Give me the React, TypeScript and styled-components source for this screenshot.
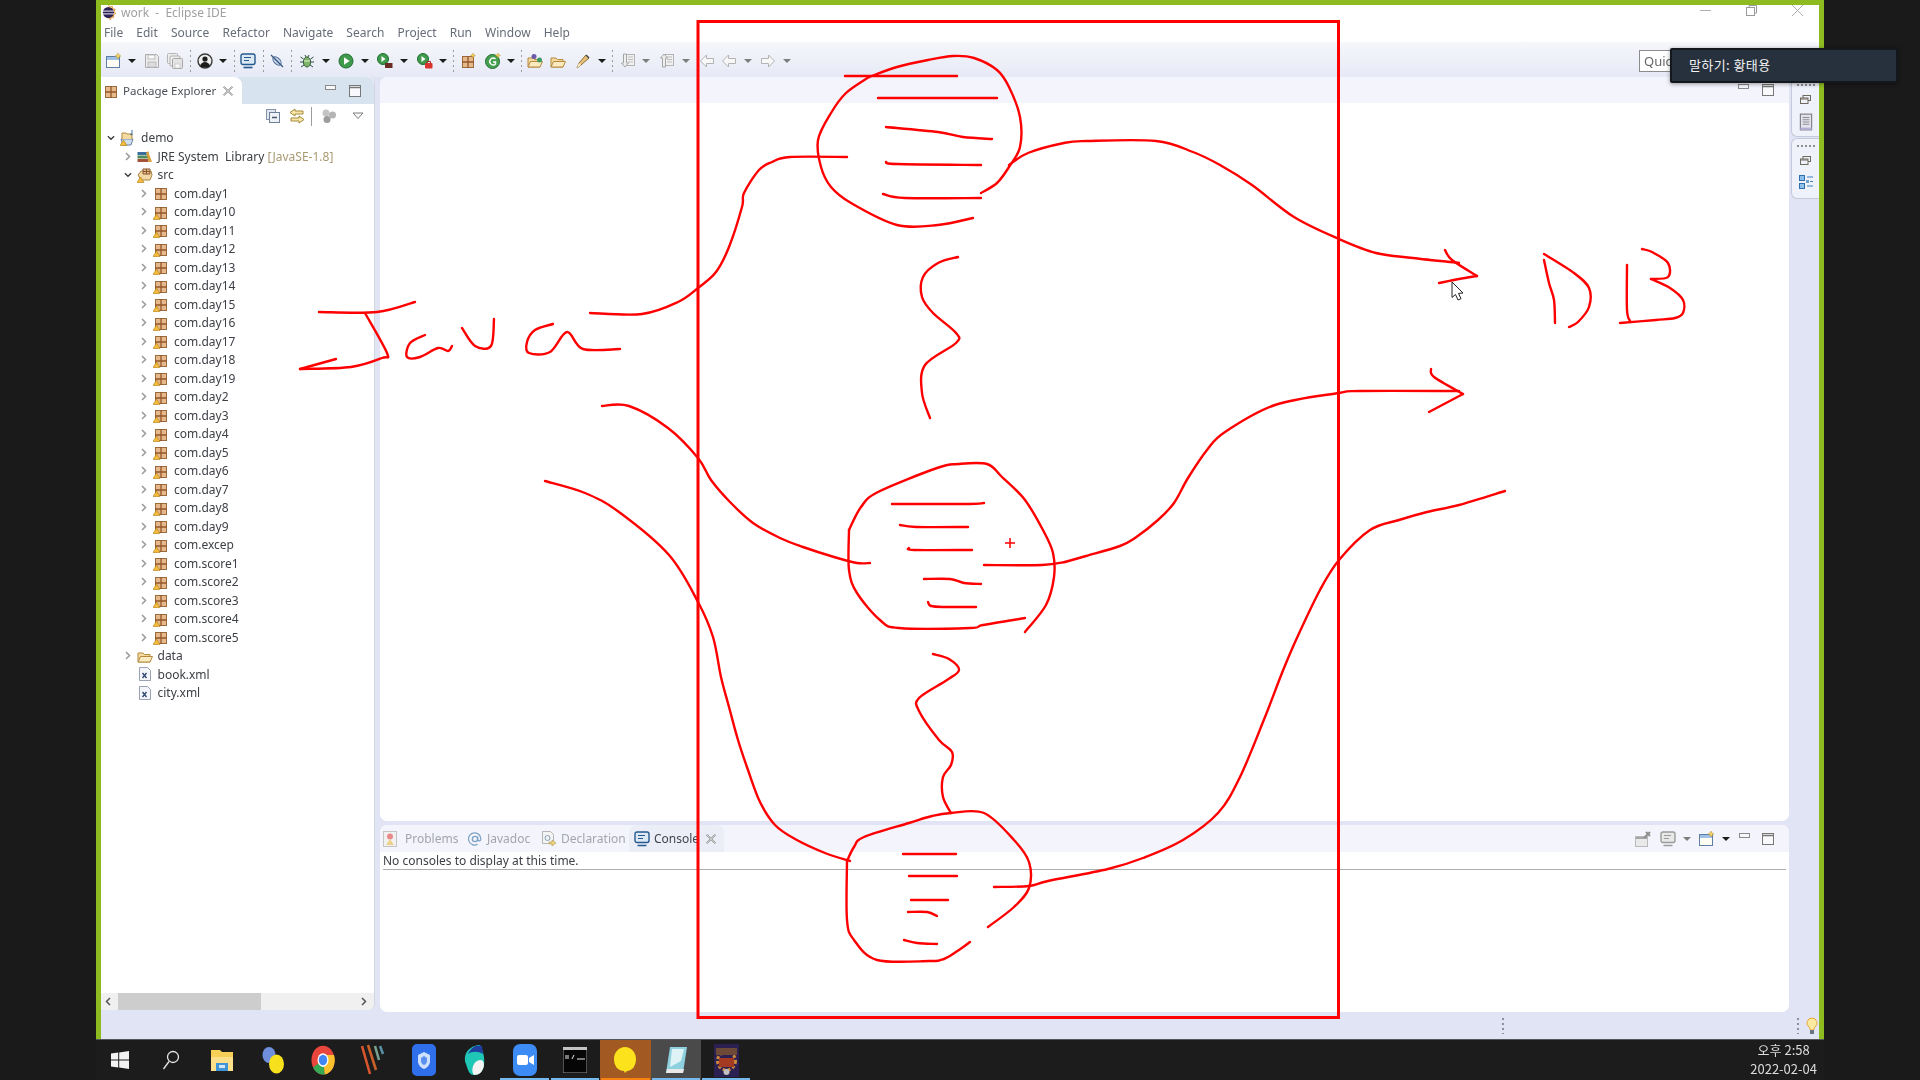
import { ReactNode } from 'react'
import styled, { createGlobalStyle } from 'styled-components'

const UI_FONT = '"Noto Sans", "Noto Sans CJK KR", sans-serif'
const GREEN = '#8dbb20'
const LILAC = '#e1e4f5'
const BAND = '#f3f4fc'
const INK = '#ff0000'

const GlobalStyle = createGlobalStyle`
  html, body {
    margin: 0;
    background: #1a1a1a;
    overflow: hidden;
  }
  * { box-sizing: border-box; }
`

const Screen = styled.div`
  position: relative;
  width: 1920px;
  height: 1080px;
  overflow: hidden;
  background: #1a1a1a;
  font-family: ${UI_FONT};
`

const Blurred = styled.div`
  filter: blur(0.35px);
`

const Window = styled.div`
  margin-left: 96px;
  width: 1728px;
  height: 1039px;
  display: flex;
  flex-direction: column;
  border: 5px solid ${GREEN};
  border-bottom: 0;
  background: #fff;
`

const TitleBar = styled.div`
  height: 18px;
  flex: none;
  display: flex;
  align-items: center;
  padding-bottom: 4px;
  color: #a0a0a0;
  font-size: 12px;
  white-space: pre;
  background: #fff;
`

const TitleText = styled.span`
  margin-left: 5px;
`

const WindowButtons = styled.div`
  margin-left: auto;
  margin-top: -4px;
  display: flex;
  gap: 35px;
  padding-right: 16px;
`

const MenuBar = styled.div`
  height: 19px;
  flex: none;
  display: flex;
  align-items: center;
  padding-left: 3px;
  gap: 13.1px;
  font-size: 12px;
  color: #666d78;
`

const Toolbar = styled.div`
  height: 35px;
  flex: none;
  display: flex;
  align-items: center;
  padding: 2px 0 0 5px;
  background: linear-gradient(#f6f7fb, #e6e9f6);
`

const Slot = styled.span<{ $gap?: number; $w?: number }>`
  flex: none;
  display: flex;
  align-items: center;
  justify-content: center;
  margin-left: ${p => p.$gap ?? 0}px;
  width: ${p => p.$w ?? 16}px;
`

const Sep = styled.span<{ $gap: number }>`
  flex: none;
  width: 1px;
  height: 22px;
  margin-left: ${p => p.$gap}px;
  background: repeating-linear-gradient(#9a9a9a 0 2px, transparent 2px 5px);
`

const Drop = styled.span<{ $gap: number; $off?: boolean }>`
  flex: none;
  width: 0;
  height: 0;
  margin-left: ${p => p.$gap}px;
  border-left: 4px solid transparent;
  border-right: 4px solid transparent;
  border-top: 4px solid ${p => (p.$off ? '#7d7d7d' : '#1c1c1c')};
`

const QuickAccess = styled.div`
  flex: none;
  margin-left: 848px;
  width: 31px;
  height: 22px;
  border: 1px solid #8c8c8c;
  border-right: 0;
  background: #fff;
  color: #666;
  font-size: 13px;
  line-height: 20px;
  padding-left: 4px;
  white-space: nowrap;
  overflow: hidden;
`

const Perspective = styled.div`
  flex: 1;
  min-height: 0;
  display: flex;
  background: ${LILAC};
`

const ExplorerPanel = styled.section`
  flex: none;
  width: 274px;
  margin-bottom: 2px;
  margin-right: 5px;
  display: flex;
  flex-direction: column;
  background: #fff;
  border-right: 1px solid #d4d6de;
  border-radius: 0 7px 7px 0;
  overflow: hidden;
`

const ExplorerBand = styled.div`
  height: 27px;
  flex: none;
  display: flex;
  align-items: center;
  background: #d8e3f0;
  border-radius: 0 8px 0 0;
  padding-right: 13px;
`

const ExplorerTab = styled.div`
  flex: none;
  width: 141px;
  height: 27px;
  display: flex;
  align-items: center;
  padding-left: 2px;
  gap: 4px;
  background: #fff;
  border-radius: 0 8px 0 0;
  font-size: 11.5px;
  white-space: nowrap;
  color: #4a4f57;
`

const BandButtons = styled.div`
  margin-left: auto;
  display: flex;
  align-items: flex-start;
  gap: 13px;
`

const ViewBar = styled.div`
  height: 24.25px;
  flex: none;
  display: flex;
  align-items: center;
  padding-left: 164px;
`

const ViewSep = styled.span`
  width: 1px;
  height: 19px;
  margin-left: 6px;
  background: #9c9c9c;
`

const Tree = styled.div`
  flex: 1;
  min-height: 0;
`

const Row = styled.div<{ $depth: number }>`
  height: 18.5px;
  display: flex;
  align-items: center;
  padding-left: ${p => 6 + p.$depth * 16.5}px;
  font-size: 12px;
  color: #3d4046;
  white-space: pre;
`

const Chevron = styled.span`
  flex: none;
  width: 8px;
  height: 12px;
  display: flex;
  align-items: center;
  justify-content: center;
`

const RowIcon = styled.span`
  flex: none;
  width: 16px;
  height: 16px;
  margin: 0 5px 0 5px;
  display: flex;
`

const Decoration = styled.span`
  color: #a89a72;
`

const ScrollBar = styled.div`
  height: 17px;
  flex: none;
  display: flex;
  align-items: center;
  background: #f0f0f0;
`

const ScrollButton = styled.span`
  flex: none;
  width: 17px;
  padding-right: 3px;
  display: flex;
  justify-content: center;
`

const ScrollThumb = styled.span`
  width: 143px;
  height: 17px;
  margin-right: auto;
  background: #cdcdcd;
`

const CenterColumn = styled.div`
  flex: none;
  width: 1409px;
  display: flex;
  flex-direction: column;
  gap: 4px;
`

const EditorPanel = styled.section`
  height: 744px;
  flex: none;
  background: #fff;
  border-radius: 7px;
  overflow: hidden;
`

const EditorBand = styled.div`
  height: 26px;
  display: flex;
  align-items: center;
  justify-content: flex-end;
  background: ${BAND};
  padding-right: 15px;
`

const ConsolePanel = styled.section`
  flex: 1;
  background: #fff;
  border-radius: 7px;
  overflow: hidden;
`

const ConsoleBand = styled.div`
  height: 27px;
  display: flex;
  align-items: stretch;
  background: ${BAND};
  padding-right: 15px;
`

const ConsoleTab = styled.div<{ $active?: boolean; $w: number; $space?: number }>`
  flex: none;
  width: ${p => p.$w}px;
  display: flex;
  align-items: center;
  gap: ${p => p.$space ?? 5}px;
  padding-left: ${p => (p.$active ? 5 : 0)}px;
  font-size: 12px;
  white-space: nowrap;
  color: ${p => (p.$active ? '#40454c' : '#a3a6ab')};
  background: ${p => (p.$active ? '#eceef7' : 'transparent')};
  border-radius: 8px 8px 0 0;
`

const ConsoleButtons = styled.div`
  margin-left: auto;
  display: flex;
  align-items: center;
`

const RaisedSlot = styled(Slot)`
  margin-top: -7px;
`

const ConsoleBody = styled.div`
  margin: 1px 3px 0;
  height: 17px;
  border-bottom: 1px solid #aeaeae;
  font-size: 12px;
  line-height: 16px;
  color: #3d4046;
`

const RightTrim = styled.aside`
  flex: 1;
  display: flex;
  flex-direction: column;
  align-items: flex-end;
`

const TrimCard = styled.div<{ $h: number }>`
  flex: none;
  width: 28px;
  height: ${p => p.$h}px;
  display: flex;
  flex-direction: column;
  align-items: center;
  gap: 9px;
  padding-top: 6px;
  border: 1px solid #c6cbdc;
  border-right: 0;
  border-radius: 6px 0 0 6px;
  background: #eff1fb;
  margin-bottom: 1px;
`

const TrimDots = styled.span`
  flex: none;
  width: 18px;
  height: 2px;
  background: repeating-linear-gradient(90deg, #8f8f8f 0 2px, transparent 2px 4px);
`

const StatusBar = styled.div`
  height: 27px;
  flex: none;
  display: flex;
  align-items: center;
  background: ${LILAC};
`

const StatusDots = styled.span<{ $gap: number }>`
  flex: none;
  width: 2px;
  height: 16px;
  margin-left: ${p => p.$gap}px;
  background: repeating-linear-gradient(#8a8f99 0 2px, transparent 2px 5px);
`

const Taskbar = styled.footer`
  margin-left: 96px;
  width: 1728px;
  height: 41px;
  display: flex;
  align-items: stretch;
  background: #1c1c1c;
  border-top: 1px solid #55565a;
`

const TaskCell = styled.div<{ $w?: number; $bg?: string; $mark?: string }>`
  position: relative;
  flex: none;
  width: ${p => p.$w ?? 50.4}px;
  display: flex;
  align-items: center;
  justify-content: center;
  background: ${p => p.$bg ?? 'transparent'};

  &::after {
    content: '';
    display: ${p => (p.$mark ? 'block' : 'none')};
    position: absolute;
    left: 1px;
    right: 1px;
    bottom: 0;
    height: 2px;
    background: ${p => p.$mark};
  }
`

const Clock = styled.div`
  margin-left: auto;
  padding-right: 7px;
  text-align: center;
  color: #dcdcdc;
  font-family: "Noto Sans CJK KR", "Noto Sans", sans-serif;
  font-size: 13px;
  line-height: 19px;
`

const SpeakerTip = styled.div`
  position: absolute;
  left: 1670px;
  top: 48px;
  width: 228px;
  height: 35px;
  padding-left: 17px;
  background: #27313d;
  border: 2px solid #14171b;
  border-radius: 2px;
  box-shadow: 0 1px 4px rgba(0, 0, 0, 0.4);
  color: #f2f2f2;
  font-family: "Noto Sans CJK KR", sans-serif;
  font-size: 13px;
  letter-spacing: 0.4px;
  line-height: 29px;
`

const InkLayer = styled.svg`
  position: absolute;
  left: 0;
  top: 0;
  pointer-events: none;
`

const Svg = ({ size = 16, children }: { size?: number; children: ReactNode }) => (
  <svg width={size} height={size} viewBox="0 0 16 16" fill="none">
    {children}
  </svg>
)

const NewWizardIcon = () => (
  <Svg>
    <rect x="0.5" y="3.5" width="13" height="11" fill="#fdfdf4" stroke="#5f7ea6" />
    <rect x="1" y="4" width="12" height="3" fill="#9fc1e6" />
    <path d="M12 0l1 2 2 1-2 1-1 2-1-2-2-1 2-1z" fill="#f4d35e" stroke="#b9953a" strokeWidth="0.5" />
  </Svg>
)

const SaveIcon = () => (
  <Svg>
    <path d="M1.5 1.5h11l2 2v11h-13z" fill="#eee" stroke="#aaa" />
    <rect x="4" y="2" width="7" height="4" fill="#fafafa" stroke="#bbb" />
    <rect x="4" y="9" width="8" height="5" fill="#ddd" stroke="#bbb" />
  </Svg>
)

const SaveAllIcon = () => (
  <Svg>
    <rect x="0.5" y="0.5" width="10" height="10" rx="1" fill="#eee" stroke="#b5b5b5" />
    <rect x="3" y="3" width="10" height="10" rx="1" fill="#eee" stroke="#b0b0b0" />
    <rect x="5.5" y="5.5" width="10" height="10" rx="1" fill="#e4e4e4" stroke="#a8a8a8" />
    <rect x="8" y="11" width="5" height="4" fill="#f8f8f8" stroke="#bbb" strokeWidth="0.6" />
  </Svg>
)

const PersonaIcon = () => (
  <Svg>
    <circle cx="8" cy="8" r="7" fill="#efefef" stroke="#3a3a3a" strokeWidth="1.4" />
    <circle cx="8" cy="6" r="2.6" fill="#1d1d1d" />
    <path d="M3 13c1-3 3-4 5-4s4 1 5 4c-2 2-8 2-10 0z" fill="#1d1d1d" />
  </Svg>
)

const MonitorIcon = ({ muted }: { muted?: boolean }) => {
  const edge = muted ? '#9b9b9b' : '#24598f'
  return (
    <Svg>
      <rect x="1" y="1" width="14" height="10.5" rx="2" fill={muted ? '#e8e8e8' : '#dce9f5'} stroke={edge} strokeWidth="1.4" />
      <path d="M4 4.5h7M4 7.5h5" stroke={edge} />
      <path d="M3.5 14.5h9" stroke={edge} strokeWidth="1.6" />
    </Svg>
  )
}

const SkipIcon = () => (
  <Svg>
    <ellipse cx="8" cy="8" rx="3" ry="5" transform="rotate(-45 8 8)" fill="#c6d5e8" stroke="#4c6d96" />
    <path d="M2 2l12 12" stroke="#33527c" strokeWidth="1.2" />
  </Svg>
)

const BugIcon = () => (
  <Svg>
    <ellipse cx="8" cy="9" rx="3.6" ry="5" fill="#7fb568" stroke="#2f5b3a" />
    <path d="M1.5 4l3 2M14.5 4l-3 2M1 9h3M15 9h-3M2 14l3-2M14 14l-3-2M6 2l1 2M10 2l-1 2" stroke="#2f4f42" />
    <path d="M5 8h6" stroke="#e8f0d0" />
  </Svg>
)

const RunIcon = () => (
  <Svg>
    <circle cx="8" cy="8" r="7" fill="#3f9a4c" stroke="#1f6e33" />
    <path d="M6 4.2v7.6l5.6-3.8z" fill="#fff" />
  </Svg>
)

const CoverageIcon = () => (
  <Svg>
    <circle cx="6" cy="6" r="5.5" fill="#3f9a4c" stroke="#1f6e33" />
    <path d="M4.5 3v6l4-3z" fill="#fff" />
    <rect x="8" y="10" width="7.5" height="5" fill="#6a2c22" />
  </Svg>
)

const ExternalIcon = () => (
  <Svg>
    <circle cx="6" cy="6" r="5.5" fill="#3f9a4c" stroke="#1f6e33" />
    <path d="M4.5 3v6l4-3z" fill="#fff" />
    <rect x="8" y="10" width="7.5" height="5.5" rx="1" fill="#d8342e" />
    <path d="M10 10V8.5h3.5V10" stroke="#a52a22" />
  </Svg>
)

const PackageIcon = ({ warn, star }: { warn?: boolean; star?: boolean }) => (
  <Svg>
    <rect x="2.5" y="3.5" width="11" height="11" fill="#e5b98c" stroke="#9a6a3c" />
    <path d="M8 3v12M2 9h12" stroke="#93562a" strokeWidth="1.3" />
    {star && <path d="M13 0l.8 1.7 1.7.8-1.7.8-.8 1.7-.8-1.7-1.7-.8 1.7-.8z" fill="#f3cf52" stroke="#ad8b2d" strokeWidth="0.4" />}
    {warn && <path d="M3.5 10L7 15.5H0z" fill="#f2bb3b" stroke="#b07d16" strokeWidth="0.6" />}
  </Svg>
)

const NewClassIcon = () => (
  <Svg>
    <circle cx="7.5" cy="8.5" r="7" fill="#46a050" stroke="#1f6e33" />
    <path d="M10.5 6a3.4 3.4 0 1 0 0 5V9H8" stroke="#fff" strokeWidth="1.4" />
    <path d="M13 0l.8 1.7 1.7.8-1.7.8-.8 1.7-.8-1.7-1.7-.8 1.7-.8z" fill="#f3cf52" stroke="#ad8b2d" strokeWidth="0.4" />
  </Svg>
)

const FolderIcon = ({ dots }: { dots?: boolean }) => (
  <Svg>
    <path d="M1 14V5h5l1.5 1.5H13V14z" fill="#f4d9a0" stroke="#b48a3c" />
    <path d="M1 14l2.5-5.5H15.5L13 14z" fill="#fbe9c0" stroke="#b48a3c" />
    {dots && <circle cx="7" cy="3.5" r="2.5" fill="#6c5aa8" />}
    {dots && <circle cx="12.5" cy="7" r="2.5" fill="#3c9a64" />}
  </Svg>
)

const PenIcon = () => (
  <Svg>
    <path d="M2 15l2-5 7-8 3 3-8 7z" fill="#e8c178" stroke="#8d6c35" />
    <path d="M2 15l2-5 2 2z" fill="#fff3cf" />
    <path d="M11 2l3 3" stroke="#444" strokeWidth="1.4" />
  </Svg>
)

const AnnotationIcon = ({ up }: { up?: boolean }) => (
  <Svg>
    <rect x="6.5" y="1.5" width="8" height="11" fill="#f1f1f1" stroke="#b4b4b4" />
    <path d="M8 4h5M8 6.5h5M8 9h5" stroke="#bcbcbc" />
    <path d={up ? 'M5 1L1.5 5H3.5V14H6.5V5H8.5z' : 'M5 14L1.5 10H3.5V1H6.5V10H8.5z'} fill="#efefef" stroke="#a5a5a5" />
  </Svg>
)

const NavArrowIcon = ({ right }: { right?: boolean }) => (
  <Svg>
    <path
      d={right ? 'M1.5 5.5h7V2l6 6-6 6v-3.5h-7z' : 'M14.5 5.5h-7V2l-6 6 6 6v-3.5h7z'}
      fill="#f8f8f8"
      stroke="#b3b3b3"
    />
  </Svg>
)

const CloseMark = () => (
  <Svg size={12}>
    <path d="M3 2l5 5 5-5 1 1-5 5 5 5-1 1-5-5-5 5-1-1 5-5-5-5z" fill="#fafafa" stroke="#6e6e6e" />
  </Svg>
)

const MinButton = () => (
  <svg width="11" height="5" viewBox="0 0 11 5">
    <rect x="0.5" y="0.5" width="10" height="4" fill="#f7f7fb" stroke="#8a8a8a" />
  </svg>
)

const MaxButton = () => (
  <svg width="12" height="12" viewBox="0 0 12 12">
    <rect x="0.5" y="0.5" width="11" height="11" fill="#f9f9fd" stroke="#777" />
    <path d="M0 2.500h12" stroke="#777" strokeWidth="1.4" />
  </svg>
)

const CollapseIcon = () => (
  <Svg>
    <rect x="1.5" y="1.5" width="9" height="10" fill="#dfe6ef" stroke="#8795a8" />
    <rect x="4.5" y="4.5" width="10" height="10" fill="#eef2f7" stroke="#6e7f96" />
    <path d="M7 9.5h5" stroke="#47586e" strokeWidth="1.4" />
  </Svg>
)

const LinkIcon = () => (
  <Svg>
    <path d="M6 1L1 4.5 6 8V6h8V3H6z" fill="#f8e7a8" stroke="#a48a38" />
    <path d="M10 8l5 3.5-5 3.5v-2H2v-3h8z" fill="#f8e7a8" stroke="#a48a38" />
  </Svg>
)

const FilterIcon = () => (
  <Svg>
    <circle cx="5" cy="5" r="3.5" fill="#c4c4c4" />
    <circle cx="11.5" cy="7" r="3.5" fill="#b4b4b4" />
    <circle cx="6" cy="11.5" r="3.5" fill="#9c9c9c" />
  </Svg>
)

const ViewMenuIcon = () => (
  <svg width="12" height="8" viewBox="0 0 12 8">
    <path d="M1 1h10L6 6.5z" fill="#f6f6f6" stroke="#7e7e7e" />
  </svg>
)

const LibraryIcon = () => (
  <Svg>
    <rect x="0.5" y="11" width="11" height="3" fill="#a2533a" />
    <rect x="0.5" y="7.5" width="11" height="3" fill="#4f8a5a" />
    <rect x="0.5" y="4" width="11" height="3" fill="#3a6e9c" />
    <path d="M11 3l4 11h-3L9 5z" fill="#d9a13c" />
  </Svg>
)

const ProjectIcon = () => (
  <Svg>
    <path d="M1 9h12l-2 6H3z" fill="#cfdff0" stroke="#6b83a5" />
    <path d="M2 9V3h4l1 1h5v5" fill="#f4d9a0" stroke="#b48a3c" />
    <path d="M12 0v5l-2-1" stroke="#3a6e9c" />
    <path d="M3.5 10L7 15.5H0z" fill="#f2bb3b" stroke="#b07d16" strokeWidth="0.6" />
  </Svg>
)

const SourceIcon = () => (
  <Svg>
    <path d="M1 8l3-4h10l1 4-2 5H4z" fill="#f2d8a6" stroke="#a98440" />
    <path d="M6 2h7v5H6zM9.5 2v5M6 4.5h7" stroke="#85572a" fill="#e5b98c" />
    <path d="M3.5 10L7 15.5H0z" fill="#f2bb3b" stroke="#b07d16" strokeWidth="0.6" />
  </Svg>
)

const XmlIcon = () => (
  <Svg>
    <path d="M2.5 1.5h8l3 3v10h-11z" fill="#f3f5fa" stroke="#9aa3b3" />
    <path d="M5.5 7l4 5M9.5 7l-4 5" stroke="#344a74" strokeWidth="1.4" />
  </Svg>
)

const TreeChevron = ({ open }: { open?: boolean }) => (
  <Chevron>
    {open ? (
      <svg width="9" height="6" viewBox="0 0 9 6">
        <path d="M1 1l3.5 3.5L8 1" fill="none" stroke="#3c3c3c" strokeWidth="1.5" />
      </svg>
    ) : (
      <svg width="6" height="9" viewBox="0 0 6 9">
        <path d="M1 1l3.5 3.5L1 8" fill="none" stroke="#9a9a9a" strokeWidth="1.5" />
      </svg>
    )}
  </Chevron>
)

const ProblemsIcon = () => (
  <Svg>
    <rect x="1.5" y="0.5" width="13" height="15" fill="#f1f1f1" stroke="#c4c4c4" />
    <circle cx="8" cy="5.5" r="3" fill="#e88a8a" />
    <path d="M4 14l4-6 4 6z" fill="#eed08c" />
  </Svg>
)

const JavadocIcon = () => (
  <Svg size={14}>
    <circle cx="8" cy="8" r="3" stroke="#7ea3c4" strokeWidth="1.6" />
    <path d="M11 5v4a2 2 0 0 0 3.5 0A7 7 0 1 0 11 14" stroke="#7ea3c4" strokeWidth="1.4" />
  </Svg>
)

const DeclarationIcon = () => (
  <Svg>
    <path d="M2.5 0.5h8l3 3v9h-11z" fill="#f3f3f3" stroke="#b5b5b5" />
    <circle cx="7.5" cy="7" r="2.5" stroke="#88a0b8" />
    <path d="M9 11h3V9l4 3-4 3v-2H9z" fill="#ebd27e" stroke="#b79a4c" strokeWidth="0.6" />
  </Svg>
)

const PinConsoleIcon = () => (
  <Svg>
    <rect x="0.5" y="5.5" width="12" height="10" fill="#eaeaea" stroke="#b9b9b9" />
    <path d="M1 6h11v2H1z" fill="#a5a5a5" />
    <path d="M9 7l6-6M11 1l4 4" stroke="#8e8e8e" strokeWidth="2" />
  </Svg>
)

const RestoreIcon = () => (
  <svg width="11" height="9" viewBox="0 0 11 9">
    <rect x="3" y="0.5" width="7.5" height="5" fill="none" stroke="#6e6a5e" />
    <rect x="0.5" y="3" width="7.5" height="5.5" fill="#eff1fb" stroke="#6e6a5e" />
    <path d="M0.5 4h7.5" stroke="#6e6a5e" />
  </svg>
)

const TaskListIcon = () => (
  <Svg size={18}>
    <rect x="3" y="1" width="10" height="14" fill="#e3e3ee" stroke="#7d7d80" />
    <path d="M5 4h6M5 6h6M5 8h6M5 10h6" stroke="#8e8e92" />
    <path d="M3 13h10v2H3z" fill="#b3add6" />
  </Svg>
)

const OutlineIcon = () => (
  <Svg>
    <rect x="1.5" y="1.5" width="5" height="5" fill="#8fc0ea" stroke="#2f6fb0" />
    <rect x="1.5" y="9.5" width="5" height="5" fill="#8fc0ea" stroke="#2f6fb0" />
    <rect x="8" y="6" width="3" height="3" fill="#6f9fd0" />
    <path d="M9 3h6M12 7.5h3M9 12h6" stroke="#3f7fc0" />
  </Svg>
)

const BulbIcon = () => (
  <svg width="12" height="18" viewBox="0 0 12 18">
    <path d="M6 1a5 5 0 0 0-3 9c1 1 1 2 1 3h4c0-1 0-2 1-3a5 5 0 0 0-3-9z" fill="#fde9a0" stroke="#e7a93a" />
    <rect x="4" y="13" width="4" height="4" fill="#6a7484" />
  </svg>
)

const EclipseLogo = () => (
  <Svg size={15}>
    <circle cx="8" cy="8" r="6" fill="#2c2255" />
    <path d="M2 6.5h12M2 9.5h12" stroke="#fff" />
    <path d="M8 0l1.4 2.5L12 1.4l.3 2.7 2.7.4-1 2.6 1.7 2-2.4 1.2.2 2.8L11 13l-1 2.6L8 14" stroke="#e08a1e" />
  </Svg>
)

const WindowsLogo = () => (
  <svg width="18" height="18" viewBox="0 0 18 18" fill="#f4f4f4">
    <path d="M0 2.6l7.2-1v7H0zM8.2 1.4L18 0v8.6H8.2zM0 9.6h7.2v7l-7.2-1zM8.2 9.6H18V18l-9.8-1.4z" />
  </svg>
)

const SearchGlyph = () => (
  <svg width="18" height="20" viewBox="0 0 18 20" fill="none" stroke="#e6e6e6" strokeWidth="1.3">
    <circle cx="11" cy="7" r="5.5" />
    <path d="M7 11.5L1.5 19" />
  </svg>
)

const ExplorerGlyph = () => (
  <svg width="24" height="24" viewBox="0 0 24 24">
    <path d="M1 2h9l2 2h11v19H1z" fill="#f6cf56" />
    <path d="M1 9h22v14H1z" fill="#ffe08a" />
    <rect x="6" y="15" width="12" height="8" fill="#3f95d8" />
    <rect x="9" y="17" width="6" height="3" fill="#cfe6f8" />
  </svg>
)

const BubblesGlyph = () => (
  <svg width="24" height="28" viewBox="0 0 24 28">
    <ellipse cx="8" cy="9" rx="6.5" ry="8" fill="#6f8fdc" />
    <ellipse cx="15.5" cy="18" rx="7.5" ry="9.5" fill="#f7e01c" />
  </svg>
)

const ChromeGlyph = () => (
  <svg width="24" height="30" viewBox="0 0 24 24" preserveAspectRatio="none">
    <circle cx="12" cy="12" r="11.5" fill="#e8453c" />
    <path d="M12 12L2 18a11.5 11.5 0 0 0 12 5.5z" fill="#34a853" />
    <path d="M12 12l2 11.5A11.5 11.5 0 0 0 23 8H12z" fill="#fbc02d" />
    <circle cx="12" cy="12" r="5.5" fill="#fff" />
    <circle cx="12" cy="12" r="4.2" fill="#4285f4" />
  </svg>
)

const StripesGlyph = () => (
  <svg width="26" height="32" viewBox="0 0 26 32" fill="none" strokeWidth="2.6">
    <path d="M2 2l8 28" stroke="#d8552e" />
    <path d="M8 1l8 25" stroke="#c9602a" />
    <path d="M15 2l4 14" stroke="#78a08e" />
    <path d="M20 2l3 8" stroke="#5a8fa4" />
  </svg>
)

const ShieldGlyph = () => (
  <svg width="24" height="32" viewBox="0 0 24 32">
    <rect width="24" height="32" rx="5" fill="#2f70ea" />
    <path d="M12 8l6 3v6c0 4-3 7-6 8-3-1-6-4-6-8v-6z" fill="#cfe0ff" />
    <path d="M12 12l3 2v3c0 2-1.500 3.500-3 4-1.500-.5-3-2-3-4v-3z" fill="#5a8ff0" />
  </svg>
)

const WhaleGlyph = () => (
  <svg width="24" height="32" viewBox="0 0 24 32">
    <path d="M4 20C0 10 8 1 18 1c3 6 5 12 4 20-1 7-5 10-10 10S6 26 4 20z" fill="#1ec7b6" />
    <path d="M6 10C9 3 15 0 20 2l1 8C16 7 10 7 6 10z" fill="#1f3f9e" />
    <path d="M12 31c-3-3-2-11 3-14 4-2 7-1 7 4-1 7-5 10-10 10z" fill="#f4f4f4" />
  </svg>
)

const ZoomGlyph = () => (
  <svg width="24" height="32" viewBox="0 0 24 32">
    <rect width="24" height="32" rx="7" fill="#3d8bf5" />
    <rect x="4" y="11" width="11" height="10" rx="2" fill="#fff" />
    <path d="M16 14l5-3v10l-5-3z" fill="#fff" />
  </svg>
)

const PromptGlyph = () => (
  <svg width="24" height="26" viewBox="0 0 24 26">
    <rect width="24" height="26" fill="#060606" stroke="#9a9a9a" />
    <rect width="24" height="3" fill="#c4c4c4" />
    <path d="M3 8v4M5 8v4M11 8l-2 4M14 12h8" stroke="#eee" strokeWidth="1" />
  </svg>
)

const TalkGlyph = () => (
  <svg width="22" height="26" viewBox="0 0 22 26">
    <path d="M11 0c6 0 11 5 11 12s-4 12-9 12l-2 2-1-2C4 24 0 19 0 12S5 0 11 0z" fill="#fbe21c" />
  </svg>
)

const NotepadGlyph = () => (
  <svg width="24" height="30" viewBox="0 0 24 30">
    <path d="M6 2h17l-4 26H2z" fill="#8fd0df" />
    <path d="M8 4h12l-3 12-11 6z" fill="#dff3f7" />
    <path d="M2 28h17l1-4H3z" fill="#e8e8e8" />
  </svg>
)

const EclipseTile = () => (
  <svg width="25" height="33" viewBox="0 0 25 33">
    <rect width="25" height="33" fill="#2c1f52" />
    <circle cx="12.5" cy="17" r="9" fill="none" stroke="#c98a3a" strokeWidth="3" strokeDasharray="3 2" />
    <rect x="2" y="4" width="21" height="7" fill="#6d4a38" />
    <rect x="5" y="14" width="15" height="9" fill="#a53a22" />
    <circle cx="12.5" cy="28" r="3" fill="#c0c0c0" />
  </svg>
)

const MouseCursor = () => (
  <path
    d="M1452 282v15.500l3.500-3 2.500 5.500 3-1.300-2.500-5.300 4.500-.4z"
    fill="#fff"
    stroke="#222"
    strokeWidth="1"
    strokeLinejoin="round"
  />
)

const toPath = (pts: number[]) => {
  const p: [number, number][] = []
  for (let i = 0; i < pts.length; i += 2) p.push([pts[i], pts[i + 1]])
  let d = `M${p[0][0]} ${p[0][1]}`
  for (let i = 0; i < p.length - 1; i++) {
    const a = p[i - 1] ?? p[i]
    const b = p[i]
    const c = p[i + 1]
    const e = p[i + 2] ?? c
    d += ` C${b[0] + (c[0] - a[0]) / 6} ${b[1] + (c[1] - a[1]) / 6} ${c[0] - (e[0] - b[0]) / 6} ${c[1] - (e[1] - b[1]) / 6} ${c[0]} ${c[1]}`
  }
  return d
}

// hand drawn annotation strokes, in screen pixels
const inkStrokes: number[][] = [
  // top blob and its lines
  [869, 77, 897, 67, 928, 60, 953, 56, 974, 58, 997, 70, 1009, 87, 1020, 117, 1020, 147, 1009, 167, 997, 183, 981, 193],
  [869, 77, 846, 93, 831, 113, 818, 140, 821, 167, 831, 187, 851, 203, 897, 225, 938, 225, 973, 218],
  [845, 76, 957, 76],
  [878, 98, 997, 98],
  [886, 127, 938, 132, 963, 137, 992, 139],
  [886, 162, 897, 164, 981, 165],
  [883, 194, 905, 198, 981, 198],
  // java side into top blob
  [590, 313, 642, 314, 678, 302, 698, 288, 716, 272, 729, 247, 742, 207, 744, 193, 759, 170, 772, 162, 790, 157, 847, 157],
  // Java
  [319, 312, 377, 312, 415, 302],
  [365, 313, 387, 353, 382, 358, 351, 367, 300, 369],
  [300, 369, 336, 359],
  [425, 335, 410, 343, 407, 357, 420, 357, 438, 348, 448, 351, 452, 346],
  [462, 328, 475, 346, 491, 346, 494, 319],
  [553, 324, 535, 330, 527, 342, 529, 353, 550, 352, 567, 332, 583, 349, 620, 349],
  // squiggles
  [958, 257, 938, 263, 923, 277, 922, 297, 933, 313, 956, 333, 956, 343, 925, 365, 922, 393, 930, 418],
  [933, 654, 949, 659, 959, 670, 947, 680, 919, 698, 919, 711, 939, 740, 952, 752, 951, 765, 943, 777, 943, 797, 951, 813],
  // top blob to DB
  [1009, 165, 1028, 153, 1064, 143, 1087, 141, 1156, 141, 1193, 152, 1220, 165, 1252, 185, 1294, 217, 1339, 239, 1376, 253, 1413, 258, 1459, 263],
  [1445, 250, 1452, 260, 1477, 276],
  [1477, 276, 1459, 279, 1439, 283],
  // DB
  [1544, 254, 1574, 273, 1589, 288, 1589, 307, 1578, 322, 1569, 327],
  [1544, 260, 1549, 283, 1554, 300, 1555, 323],
  [1627, 265, 1627, 310, 1630, 321],
  [1620, 323, 1656, 320, 1675, 318, 1683, 313, 1683, 300, 1670, 288, 1651, 279],
  [1651, 279, 1668, 277, 1668, 263, 1652, 252, 1642, 249],
  // middle blob to DB
  [1065, 562, 1086, 556, 1120, 546, 1135, 538, 1158, 520, 1174, 503, 1188, 478, 1207, 450, 1225, 432, 1275, 405, 1339, 393, 1360, 391, 1459, 391],
  [1431, 369, 1434, 377, 1463, 394],
  [1463, 394, 1429, 412],
  // bottom blob to DB
  [994, 887, 1029, 886, 1048, 881, 1108, 869, 1143, 858, 1183, 840, 1218, 813, 1240, 777, 1265, 717, 1282, 673, 1296, 640, 1320, 590, 1339, 560, 1370, 530, 1399, 520, 1427, 512, 1459, 505, 1505, 491],
  // java side into middle and bottom blobs
  [602, 406, 629, 406, 668, 428, 698, 458, 711, 480, 730, 502, 753, 523, 780, 538, 803, 547, 834, 557, 857, 563, 870, 563],
  [545, 481, 585, 493, 619, 512, 669, 555, 698, 602, 713, 637, 721, 677, 729, 707, 738, 740, 748, 770, 760, 802, 775, 825, 795, 839, 825, 853, 850, 861],
  // middle blob
  [849, 530, 861, 507, 878, 492, 937, 468, 958, 464, 987, 464, 1002, 477, 1025, 500, 1044, 532, 1053, 553, 1054, 577, 1046, 605, 1025, 632],
  [849, 530, 849, 570, 857, 593, 880, 620, 899, 628, 970, 628, 983, 625, 1025, 618],
  [892, 504, 970, 504, 984, 503],
  [900, 525, 916, 527, 968, 527],
  [909, 548, 914, 550, 972, 550],
  [924, 579, 950, 579, 964, 583, 981, 584],
  [928, 602, 931, 606, 945, 607, 976, 607],
  [984, 565, 1042, 565, 1065, 562],
  // bottom blob
  [847, 861, 854, 847, 864, 837, 909, 823, 932, 816, 951, 813, 984, 813, 1014, 840, 1029, 862, 1029, 888, 1014, 907, 988, 927],
  [847, 861, 847, 920, 854, 940, 877, 960, 929, 961, 944, 959, 959, 950, 970, 942],
  [903, 854, 956, 854],
  [909, 876, 957, 876],
  [911, 900, 948, 900],
  [908, 912, 927, 912, 937, 916],
  [904, 940, 917, 943, 937, 944],
]

const packages = [
  'com.day1', 'com.day10', 'com.day11', 'com.day12', 'com.day13', 'com.day14', 'com.day15',
  'com.day16', 'com.day17', 'com.day18', 'com.day19', 'com.day2', 'com.day3', 'com.day4',
  'com.day5', 'com.day6', 'com.day7', 'com.day8', 'com.day9', 'com.excep', 'com.score1',
  'com.score2', 'com.score3', 'com.score4', 'com.score5',
]

const menus = ['File', 'Edit', 'Source', 'Refactor', 'Navigate', 'Search', 'Project', 'Run', 'Window', 'Help']

const App = () => (
  <Screen>
    <GlobalStyle />
    <Blurred>
      <Window>
        <TitleBar>
          <EclipseLogo />
          <TitleText>work  -  Eclipse IDE</TitleText>
          <WindowButtons>
            <svg width="11" height="11" viewBox="0 0 11 11"><path d="M0 5.500h11" stroke="#b0b0b0" /></svg>
            <svg width="11" height="11" viewBox="0 0 11 11" fill="none" stroke="#9a9a9a"><path d="M3 2.500V.5h7.500V8H8.500" /><rect x="0.5" y="2.500" width="8" height="8" /></svg>
            <svg width="11" height="11" viewBox="0 0 11 11" stroke="#b0b0b0"><path d="M0 0l11 11M11 0L0 11" /></svg>
          </WindowButtons>
        </TitleBar>
        <MenuBar>
          {menus.map(m => (
            <span key={m}>{m}</span>
          ))}
        </MenuBar>
        <Toolbar>
          <Slot><NewWizardIcon /></Slot>
          <Drop $gap={6} />
          <Slot $gap={8}><SaveIcon /></Slot>
          <Slot $gap={7}><SaveAllIcon /></Slot>
          <Sep $gap={7} />
          <Slot $gap={6}><PersonaIcon /></Slot>
          <Drop $gap={6} />
          <Sep $gap={7} />
          <Slot $gap={5}><MonitorIcon /></Slot>
          <Sep $gap={7} />
          <Slot $gap={5}><SkipIcon /></Slot>
          <Sep $gap={6} />
          <Slot $gap={7}><BugIcon /></Slot>
          <Drop $gap={7} />
          <Slot $gap={8}><RunIcon /></Slot>
          <Drop $gap={7} />
          <Slot $gap={8}><CoverageIcon /></Slot>
          <Drop $gap={7} />
          <Slot $gap={9}><ExternalIcon /></Slot>
          <Drop $gap={6} />
          <Sep $gap={6} />
          <Slot $gap={6}><PackageIcon star /></Slot>
          <Slot $gap={9}><NewClassIcon /></Slot>
          <Drop $gap={6} />
          <Sep $gap={6} />
          <Slot $gap={5}><FolderIcon dots /></Slot>
          <Slot $gap={7}><FolderIcon /></Slot>
          <Slot $gap={9}><PenIcon /></Slot>
          <Drop $gap={7} />
          <Sep $gap={6} />
          <Slot $gap={7}><AnnotationIcon /></Slot>
          <Drop $gap={6} $off />
          <Slot $gap={9}><AnnotationIcon up /></Slot>
          <Drop $gap={7} $off />
          <Slot $gap={9}><NavArrowIcon /></Slot>
          <Slot $gap={6}><NavArrowIcon /></Slot>
          <Drop $gap={7} $off />
          <Slot $gap={8}><NavArrowIcon right /></Slot>
          <Drop $gap={7} $off />
          <QuickAccess>Quic</QuickAccess>
        </Toolbar>
        <Perspective>
          <ExplorerPanel>
            <ExplorerBand>
              <ExplorerTab>
                <PackageIcon />
                Package Explorer
                <Slot $w={12} $gap={2}><CloseMark /></Slot>
              </ExplorerTab>
              <BandButtons>
                <MinButton />
                <MaxButton />
              </BandButtons>
            </ExplorerBand>
            <ViewBar>
              <Slot><CollapseIcon /></Slot>
              <Slot $gap={8}><LinkIcon /></Slot>
              <ViewSep />
              <Slot $gap={9}><FilterIcon /></Slot>
              <Slot $w={12} $gap={15}><ViewMenuIcon /></Slot>
            </ViewBar>
            <Tree>
              <Row $depth={0}>
                <TreeChevron open />
                <RowIcon><ProjectIcon /></RowIcon>
                demo
              </Row>
              <Row $depth={1}>
                <TreeChevron />
                <RowIcon><LibraryIcon /></RowIcon>
                JRE System  Library <Decoration>[JavaSE-1.8]</Decoration>
              </Row>
              <Row $depth={1}>
                <TreeChevron open />
                <RowIcon><SourceIcon /></RowIcon>
                src
              </Row>
              {packages.map(name => (
                <Row $depth={2} key={name}>
                  <TreeChevron />
                  <RowIcon><PackageIcon warn={name !== 'com.day1'} /></RowIcon>
                  {name}
                </Row>
              ))}
              <Row $depth={1}>
                <TreeChevron />
                <RowIcon><FolderIcon /></RowIcon>
                data
              </Row>
              <Row $depth={1}>
                <Chevron />
                <RowIcon><XmlIcon /></RowIcon>
                book.xml
              </Row>
              <Row $depth={1}>
                <Chevron />
                <RowIcon><XmlIcon /></RowIcon>
                city.xml
              </Row>
            </Tree>
            <ScrollBar>
              <ScrollButton>
                <svg width="6" height="9" viewBox="0 0 6 9"><path d="M5 1L1.500 4.500 5 8" fill="none" stroke="#555" strokeWidth="1.5" /></svg>
              </ScrollButton>
              <ScrollThumb />
              <ScrollButton>
                <svg width="6" height="9" viewBox="0 0 6 9"><path d="M1 1l3.500 3.500L1 8" fill="none" stroke="#555" strokeWidth="1.5" /></svg>
              </ScrollButton>
            </ScrollBar>
          </ExplorerPanel>
          <CenterColumn>
            <EditorPanel>
              <EditorBand>
                <BandButtons>
                  <MinButton />
                  <MaxButton />
                </BandButtons>
              </EditorBand>
            </EditorPanel>
            <ConsolePanel>
              <ConsoleBand>
                <ConsoleTab $w={88} $space={7}>
                  <Slot $gap={2}><ProblemsIcon /></Slot>
                  Problems
                </ConsoleTab>
                <ConsoleTab $w={72}>
                  <Slot $w={14}><JavadocIcon /></Slot>
                  Javadoc
                </ConsoleTab>
                <ConsoleTab $w={89}>
                  <Slot><DeclarationIcon /></Slot>
                  Declaration
                </ConsoleTab>
                <ConsoleTab $active $w={95} $space={4}>
                  <Slot><MonitorIcon /></Slot>
                  Console
                  <Slot $w={12} $gap={2}><CloseMark /></Slot>
                </ConsoleTab>
                <ConsoleButtons>
                  <Slot><PinConsoleIcon /></Slot>
                  <Slot $gap={9}><MonitorIcon muted /></Slot>
                  <Drop $gap={7} $off />
                  <Slot $gap={8}><NewWizardIcon /></Slot>
                  <Drop $gap={7} />
                  <RaisedSlot $w={11} $gap={9}><MinButton /></RaisedSlot>
                  <Slot $w={12} $gap={12}><MaxButton /></Slot>
                </ConsoleButtons>
              </ConsoleBand>
              <ConsoleBody>No consoles to display at this time.</ConsoleBody>
            </ConsolePanel>
          </CenterColumn>
          <RightTrim>
            <TrimCard $h={60}>
              <TrimDots />
              <RestoreIcon />
              <TaskListIcon />
            </TrimCard>
            <TrimCard $h={61}>
              <TrimDots />
              <RestoreIcon />
              <OutlineIcon />
            </TrimCard>
          </RightTrim>
        </Perspective>
        <StatusBar>
          <StatusDots $gap={1401} />
          <StatusDots $gap={293} />
          <Slot $w={12} $gap={7}><BulbIcon /></Slot>
        </StatusBar>
      </Window>
      <Taskbar>
        <TaskCell $w={48}><WindowsLogo /></TaskCell>
        <TaskCell $w={53}><SearchGlyph /></TaskCell>
        <TaskCell><ExplorerGlyph /></TaskCell>
        <TaskCell><BubblesGlyph /></TaskCell>
        <TaskCell><ChromeGlyph /></TaskCell>
        <TaskCell><StripesGlyph /></TaskCell>
        <TaskCell><ShieldGlyph /></TaskCell>
        <TaskCell><WhaleGlyph /></TaskCell>
        <TaskCell $mark="#76b9ed"><ZoomGlyph /></TaskCell>
        <TaskCell $mark="#76b9ed"><PromptGlyph /></TaskCell>
        <TaskCell $bg="#a35a22" $mark="#f7820f"><TalkGlyph /></TaskCell>
        <TaskCell $bg="#4a4a4a" $mark="#76b9ed"><NotepadGlyph /></TaskCell>
        <TaskCell $mark="#76b9ed"><EclipseTile /></TaskCell>
        <Clock>
          오후 2:58
          <br />
          2022-02-04
        </Clock>
      </Taskbar>
    </Blurred>
    <SpeakerTip>말하기: 황태용</SpeakerTip>
    <InkLayer width="1920" height="1080" viewBox="0 0 1920 1080" fill="none">
      <rect x="698" y="21.5" width="640.500" height="996" stroke={INK} strokeWidth="3" />
      {inkStrokes.map((pts, i) => (
        <path key={i} d={toPath(pts)} stroke={INK} strokeWidth="2.4" strokeLinecap="round" strokeLinejoin="round" />
      ))}
      <path d="M1005 543h10M1010 538v10" stroke={INK} strokeWidth="1.5" />
      <MouseCursor />
    </InkLayer>
  </Screen>
)

export default App
